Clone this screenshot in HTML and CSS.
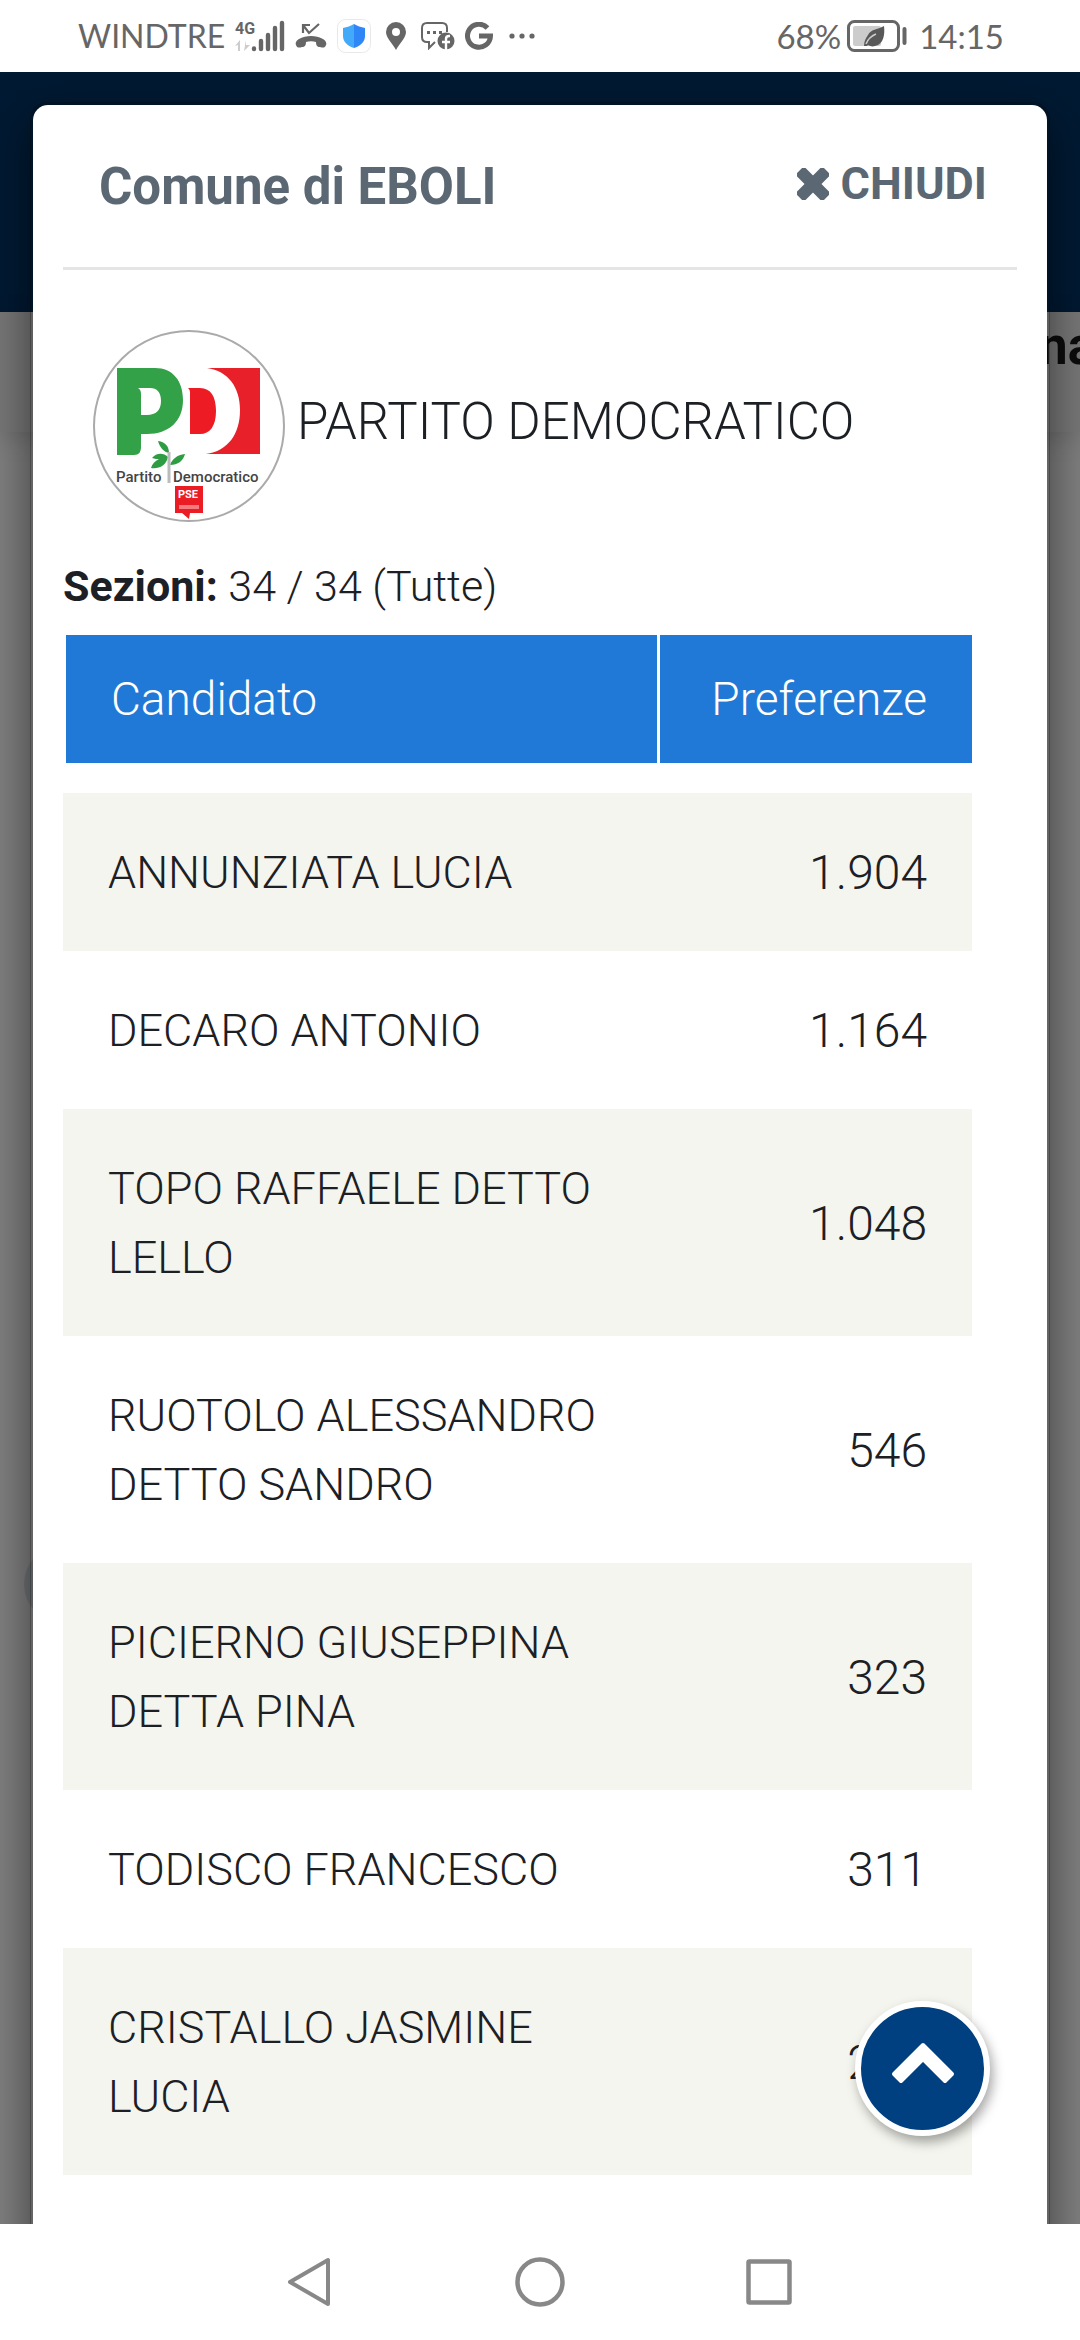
FILE: index.html
```html
<!DOCTYPE html>
<html lang="it">
<head>
  <meta charset="UTF-8">
  <meta name="viewport" content="width=device-width, initial-scale=1.0">
  <title>Comune di EBOLI - Preferenze</title>
  <link rel="stylesheet" href="styles.css">
</head>
<body>

  <!-- Status bar -->
  <header class="status-bar">
    <div class="status-left">
      <span class="carrier">WINDTRE</span>
      <svg class="signal" width="50" height="32" viewBox="0 0 50 32" aria-hidden="true">
        <text x="0" y="14" class="signal-type">4G</text>
        <path d="M0 26l5-6v11H3v-6zM9 20v11M9 31l6-6h-4v-5z" fill="#ccc"/>
        <path d="M19 28.500v.5M26 21v8M33 15v14M40 8v21M47 3v26" stroke="#666" stroke-width="4.400" stroke-linecap="round"/>
      </svg>
      <svg class="icon-call" width="32" height="26" viewBox="0 0 32 26" aria-hidden="true">
        <path d="M8 10V1M8 2h7M8 2l6 8L24 1" fill="none" stroke="#666" stroke-width="2.200"/>
        <path d="M1 22c-2-4 5-9 15-9s17 5 15 9c-1 3-3 3-6 2-3 0-4-2-4-5-3-1-7-1-10 0 0 3-1 5-4 5-3 1-5 1-6-2z" fill="#666"/>
      </svg>
      <svg class="icon-shield" width="34" height="34" viewBox="0 0 34 34" aria-hidden="true">
        <rect x=".5" y=".5" width="33" height="33" rx="8" fill="#fff" stroke="#e8e8e8"/>
        <path d="M17 5c3 2 7 3 11 4v8c0 6-5 10-11 12z" fill="#2f86f6"/>
        <path d="M17 5C14 7 10 8 6 9v8c0 6 5 10 11 12z" fill="#42aaf9"/>
      </svg>
      <svg class="icon-pin" width="20" height="28" viewBox="0 0 20 28" aria-hidden="true">
        <path d="M10 0a10 10 0 0 0-10 10c0 6 7 12 10 18 3-6 10-12 10-18A10 10 0 0 0 10 0zm0 6a4 4 0 1 1 0 8 4 4 0 0 1 0-8z" fill="#666" fill-rule="evenodd"/>
      </svg>
      <svg class="icon-chat" width="34" height="28" viewBox="0 0 34 28" aria-hidden="true">
        <path d="M14 20l-6 6v-6H6c-3 0-5-2-5-5V6c0-3 2-5 5-5h15c3 0 5 2 5 5v4" fill="none" stroke="#666" stroke-width="2"/>
        <path d="M6 9h3v3H6zM12 9h3v3h-3zM18 9h3v3h-3z" fill="#666"/>
        <circle cx="25" cy="19" r="8.500" fill="#666"/>
        <path d="M29 14h-1c-2 0-3 1-3 3v11M21 20h8" fill="none" stroke="#fff" stroke-width="2.400"/>
      </svg>
      <svg class="icon-g" width="28" height="28" viewBox="0 0 28 28" aria-hidden="true">
        <path d="M22.500 6A11.500 11.500 0 1 0 25.500 14H14" fill="none" stroke="#666" stroke-width="5"/>
      </svg>
      <svg class="icon-more" width="26" height="6" viewBox="0 0 26 6" aria-hidden="true">
        <circle cx="3" cy="3" r="2.600" fill="#666"/>
        <circle cx="13" cy="3" r="2.600" fill="#666"/>
        <circle cx="23" cy="3" r="2.600" fill="#666"/>
      </svg>
    </div>
    <div class="status-right">
      <span>68%</span>
      <svg width="60" height="32" viewBox="0 0 60 32" aria-hidden="true">
        <rect x="1.500" y="1.500" width="50" height="29" rx="6" fill="#fff" stroke="#666" stroke-width="3"/>
        <rect x="6" y="6" width="28" height="20" rx="2" fill="#ccc"/>
        <path d="M37 6c1 8 0 18-9 20-3 1-5 0-7-1l-1 1-3 0c0-5 2-8 4-11 3-6 9-5 16-9z" fill="#595959"/>
        <path d="M19 24c2-5 5-8 10-10" fill="none" stroke="#ccc" stroke-width="1.500"/>
        <path d="M57.500 9v14" stroke="#666" stroke-width="4" stroke-linecap="round"/>
      </svg>
      <time>14:15</time>
    </div>
  </header>

  <main class="viewport">

    <!-- Page behind the dialog -->
    <div class="page">
      <div class="page-header"></div>
      <div class="page-tabs"><span>na</span></div>
      <div class="page-body">
        <div class="page-spot"></div>
      </div>
    </div>

    <!-- Dialog -->
    <section class="modal" role="dialog" aria-labelledby="modalTitle">
      <div class="modal-header">
        <h1 id="modalTitle">Comune di EBOLI</h1>
        <button type="button" class="close">
          <svg width="32" height="32" viewBox="0 0 32 32" aria-hidden="true">
            <rect x="-3" y="10" width="38" height="12" rx="2.500" fill="#5b6873" transform="rotate(45 16 16)"/>
            <rect x="-3" y="10" width="38" height="12" rx="2.500" fill="#5b6873" transform="rotate(-45 16 16)"/>
          </svg>
          CHIUDI
        </button>
      </div>

      <div class="party">
        <svg width="192" height="192" viewBox="0 0 192 192" role="img" aria-label="Partito Democratico">
          <circle cx="96" cy="96" r="95" fill="#fff" stroke="#aaa" stroke-width="2"/>
          <path d="M24 38h38c18 0 28 13 28 32 0 21-14 34-36 34h-6v13c0 5-2 8-7 8H24zM45 58c2 1 3 3 3 6v21h6c9 0 14-5 14-14s-4-13-11-13z" fill="#33a147" fill-rule="evenodd"/>
          <path d="M95 58h12c11 0 16 9 16 23 0 15-6 23-16 23H97V64c0-3 0-4-2-6z" fill="#ed1c24"/>
          <path d="M114 38h53v86h-54c22-3 34-20 34-44 0-23-12-39-33-42z" fill="#e8202a"/>
          <path d="M65 111c8 1 11 6 11 12-5-1-9-5-11-12zM92 124c-2 7-7 11-15 11 2-6 7-10 15-11zM75 127c-5-5-12-4-16 1 3 1 5 1 7 1-4 2-7 5-8 9 8 1 15-2 17-11z" fill="#2e9c43"/>
          <path d="M76 122v31" stroke="#bbb" stroke-width="3"/>
          <text x="23" y="152" class="logo-name">Partito</text>
          <text x="80" y="152" class="logo-name">Democratico</text>
          <path d="M82 156h28v27H97l-1 6-7-6h-7z" fill="#ec1c24"/>
          <text x="85" y="168" class="logo-pse">PSE</text>
          <path d="M86 177h20" stroke="#f47c80" stroke-width="4"/>
        </svg>
        <h2>PARTITO DEMOCRATICO</h2>
      </div>

      <p class="sections"><strong>Sezioni:</strong> 34 / 34 (Tutte)</p>

      <table class="results">
        <thead>
          <tr>
            <th scope="col">Candidato</th>
            <th scope="col">Preferenze</th>
          </tr>
        </thead>
        <tbody>
          <tr>
            <td>ANNUNZIATA LUCIA</td>
            <td>1.904</td>
          </tr>
          <tr>
            <td>DECARO ANTONIO</td>
            <td>1.164</td>
          </tr>
          <tr>
            <td>TOPO RAFFAELE DETTO LELLO</td>
            <td>1.048</td>
          </tr>
          <tr>
            <td>RUOTOLO ALESSANDRO DETTO SANDRO</td>
            <td>546</td>
          </tr>
          <tr>
            <td>PICIERNO GIUSEPPINA DETTA PINA</td>
            <td>323</td>
          </tr>
          <tr>
            <td>TODISCO FRANCESCO</td>
            <td>311</td>
          </tr>
          <tr>
            <td>CRISTALLO JASMINE LUCIA</td>
            <td>280</td>
          </tr>
        </tbody>
      </table>
    </section>

    <button type="button" class="back-to-top" aria-label="Torna su">
      <svg width="64" height="42" viewBox="0 0 64 42" aria-hidden="true">
        <path d="M32 3L3 32l7 7 22-22 22 22 7-7z" fill="#fff" stroke="#fff" stroke-width="4" stroke-linejoin="round"/>
      </svg>
    </button>
  </main>

  <!-- System navigation -->
  <nav class="nav-bar">
    <button type="button" aria-label="Indietro">
      <svg width="50" height="50" viewBox="0 0 50 50"><path d="M42 3v44L4 25z" fill="none" stroke="#888" stroke-width="4" stroke-linejoin="round"/></svg>
    </button>
    <button type="button" aria-label="Home">
      <svg width="50" height="50" viewBox="0 0 50 50"><circle cx="25" cy="25" r="22.500" fill="none" stroke="#888" stroke-width="4.500"/></svg>
    </button>
    <button type="button" aria-label="Recenti">
      <svg width="50" height="50" viewBox="0 0 50 50"><rect x="4.500" y="4.500" width="41" height="41" rx="1" fill="none" stroke="#888" stroke-width="4.500"/></svg>
    </button>
  </nav>

</body>
</html>
```

FILE: styles.css
```css
* {
  box-sizing: border-box;
  margin: 0;
  padding: 0;
}

body {
  display: flex;
  flex-direction: column;
  height: 100vh;
  background: #fff;
  color: #1c2024;
  font-family: Roboto, "Liberation Sans", sans-serif;
  font-weight: 300;
  font-size: 45px;
  line-height: 69px;
}

button {
  border: none;
  background: none;
  font: inherit;
  color: inherit;
  cursor: pointer;
}

/* Status bar */
.status-bar {
  display: flex;
  justify-content: space-between;
  align-items: center;
  height: 72px;
  padding: 0 76px 0 78px;
  color: #666;
  font-family: Lato, sans-serif;
  font-weight: 400;
  font-size: 33px;
  line-height: 40px;
}

.status-left,
.status-right {
  display: flex;
  align-items: center;
}

.status-left {
  gap: 10px;
}

.status-right {
  gap: 6px;
}

.status-right time {
  margin-left: 6px;
}

.carrier {
  font-size: 32px;
}

.icon-pin {
  margin: 0 5px;
}

.icon-more {
  margin-left: 6px;
}

.signal-type {
  font: bold 16px Roboto, sans-serif;
  fill: #666;
}

/* Page behind the dialog */
.viewport {
  position: relative;
  flex: 1;
  min-height: 0;
  overflow: hidden;
}

.page {
  height: 100%;
  overflow: hidden;
  background: #7f7f7f;
}

.page-header {
  height: 240px;
  background: #001a33;
}

.page-tabs {
  display: flex;
  justify-content: flex-end;
  height: 120px;
  background: #777;
  color: #0c0c0c;
  font-weight: 700;
  font-size: 51px;
  box-shadow: 0 6px 24px rgba(0, 0, 0, 0.15);
}

.page-tabs span {
  margin-right: -15px;
}

.page-body {
  padding: 1112px 24px 0;
}

.page-spot {
  width: 80px;
  height: 80px;
  border-radius: 50%;
  background: #6f7275;
}

/* Dialog */
.modal {
  position: absolute;
  top: 30px;
  left: 30px;
  right: 30px;
  bottom: -60px;
  padding: 0 30px;
  border: 3px solid rgba(0, 0, 0, 0.2);
  border-radius: 18px;
  background: #fff;
  background-clip: padding-box;
  box-shadow: 0 15px 45px rgba(0, 0, 0, 0.5);
}

.modal-header {
  display: flex;
  justify-content: space-between;
  align-items: flex-start;
  height: 165px;
  padding: 40px 30px 0 36px;
  border-bottom: 3px solid #e5e5e5;
  color: #5b6873;
}

.modal-header h1 {
  font-size: 51px;
  font-weight: 700;
  line-height: 84px;
}

.close {
  display: flex;
  align-items: center;
  gap: 12px;
  font-weight: 700;
  line-height: 78px;
}

.party {
  display: flex;
  align-items: center;
  gap: 12px;
  margin: 60px 30px 0;
}

.party h2 {
  padding-bottom: 9px;
  font-size: 51px;
  font-weight: 300;
}

.logo-name {
  font: 500 15px Roboto, sans-serif;
  fill: #444;
}

.logo-pse {
  font: bold 11px Roboto, sans-serif;
  fill: #fff;
}

.sections {
  padding: 30px 0 14px;
  font-size: 43px;
}

.sections strong {
  font-weight: 700;
}

/* Results */
.results {
  width: calc(100% - 45px);
  border-spacing: 0;
}

.results th {
  height: 128px;
  padding: 0 45px;
  border-left: 3px solid #fff;
  background: #2079d6;
  color: #fff;
  font-weight: 300;
  font-size: 46px;
  text-align: left;
}

.results th:last-child,
.results td:last-child {
  width: 315px;
  text-align: right;
}

.results td:last-child {
  font-size: 48px;
}

.results thead::after {
  content: "";
  display: block;
  height: 30px;
}

.results td {
  padding: 45px 45px 44px;
}

.results tbody tr:nth-child(odd) {
  background: #f4f5ee;
}

.back-to-top {
  position: absolute;
  right: 90px;
  bottom: 88px;
  display: flex;
  justify-content: center;
  align-items: center;
  width: 135px;
  height: 135px;
  padding-bottom: 12px;
  border: 6px solid #fff;
  border-radius: 50%;
  background: #003f80;
  box-shadow: 3px 6px 12px rgba(0, 0, 0, 0.35);
}

/* System navigation */
.nav-bar {
  display: flex;
  justify-content: center;
  align-items: center;
  gap: 179px;
  height: 116px;
  background: #fff;
}

.nav-bar button {
  display: flex;
}
```
